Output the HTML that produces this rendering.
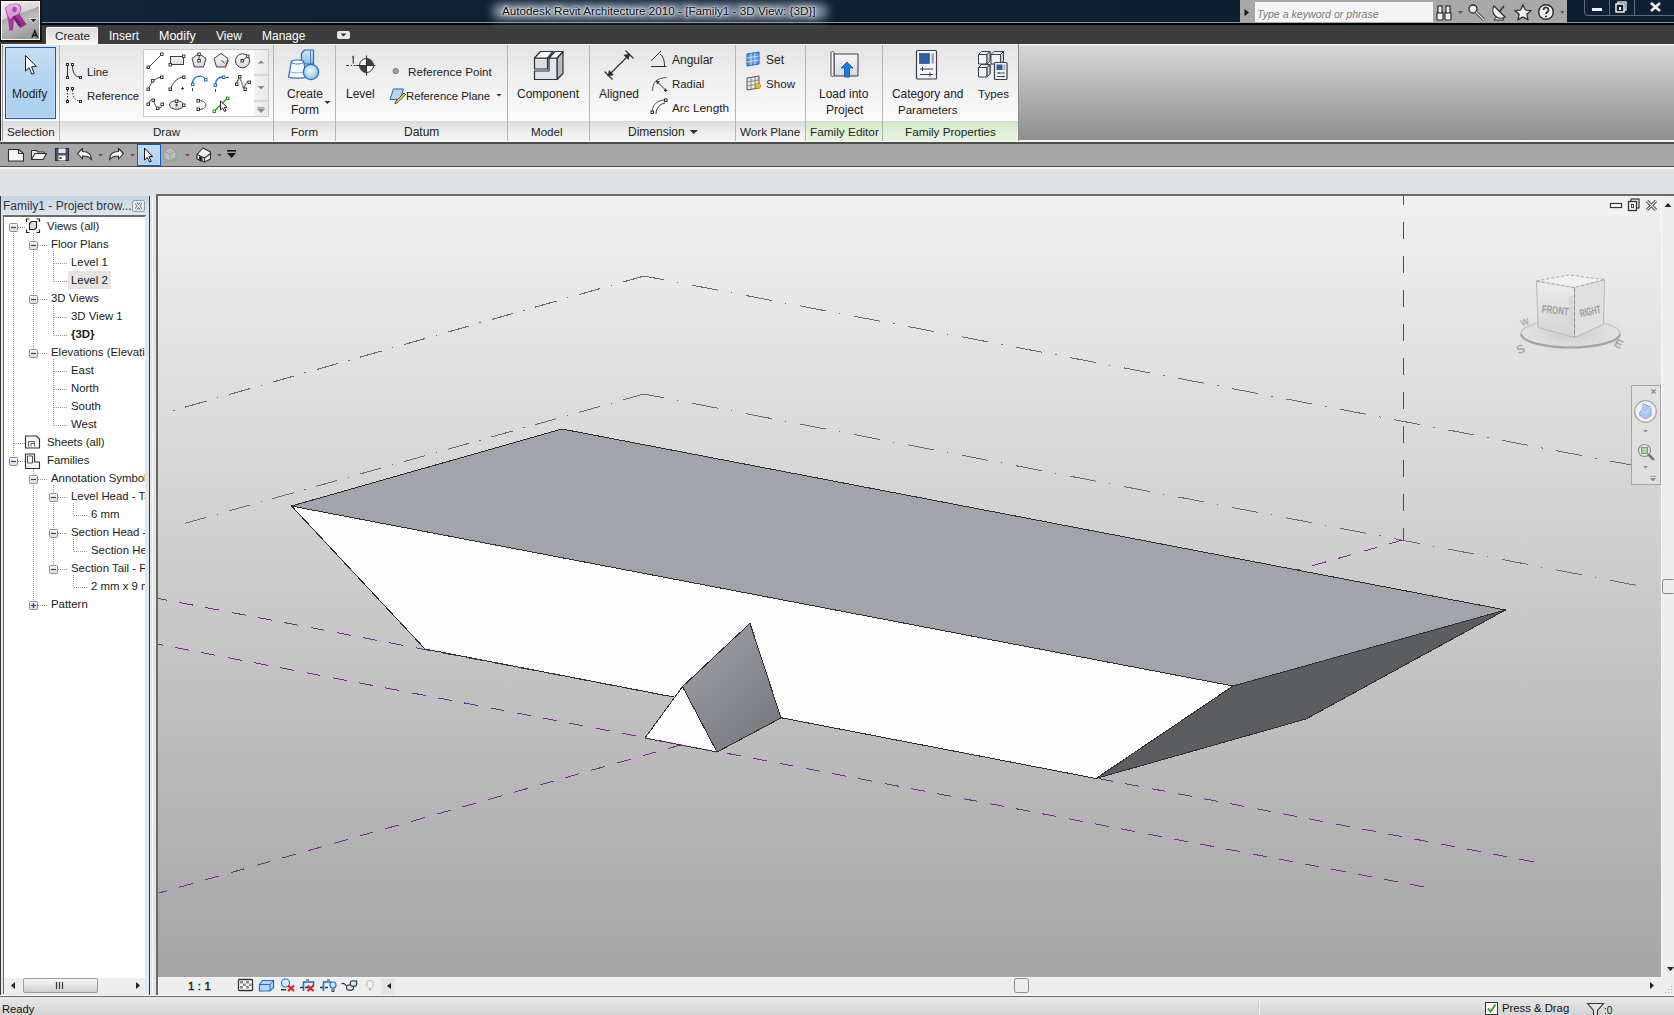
<!DOCTYPE html>
<html><head><meta charset="utf-8">
<style>
*{margin:0;padding:0;box-sizing:border-box}
html,body{width:1674px;height:1015px;overflow:hidden;background:#e1e2e4;font-family:"Liberation Sans",sans-serif;font-size:12px;color:#222}
.a{position:absolute}
.t{position:absolute;white-space:nowrap;line-height:14px}
</style></head><body>
<!-- title bar -->
<div class="a" style="left:0;top:0;width:1674px;height:22px;background:linear-gradient(90deg,#13253b 0%,#0f2034 35%,#0d1d31 100%)"></div>
<div class="a" style="left:0;top:22px;width:1674px;height:1px;background:#8193a8"></div>
<div class="a" style="left:0;top:23px;width:1674px;height:2px;background:#000"></div>
<div class="a" style="left:0;top:25px;width:1674px;height:19px;background:#3c3c3c"></div>
<!-- ribbon -->
<div class="a" style="left:0;top:44px;width:1674px;height:97px;background:linear-gradient(#f4f4f4,#f4f4f4 1px,#d6d6d6 2px,#8e8e8e 96px,#f4f4f4 96px)"></div>
<div class="a" style="left:0;top:44px;width:1019px;height:1px;background:#f8f8f8"></div>
<div class="a" style="left:0;top:45px;width:1019px;height:76px;background:linear-gradient(#e4e4e4,#eeeeee 40%,#f8f8f8 85%,#fbfbfb)"></div>
<div class="a" style="left:0;top:121px;width:1019px;height:1px;background:#d8d8d8"></div>
<div class="a" style="left:0;top:122px;width:1019px;height:19px;background:linear-gradient(#dcdcdc,#efefef 55%,#f4f4f4)"></div>
<div class="a" style="left:806px;top:122px;width:212px;height:19px;background:linear-gradient(#d3e8c8,#e2f2da 60%,#e8f6e1)"></div>
<div class="a" style="left:0;top:44px;width:1px;height:97px;background:#222"></div>
<div class="a" style="left:2px;top:45px;width:1px;height:96px;background:#9a9a9a"></div>
<div class="a" style="left:1018px;top:44px;width:1px;height:97px;background:#8a8a8a"></div>
<div class="a" style="left:59px;top:45px;width:1px;height:96px;background:#b4b4b4"></div>
<div class="a" style="left:273px;top:45px;width:1px;height:96px;background:#b4b4b4"></div>
<div class="a" style="left:335px;top:45px;width:1px;height:96px;background:#b4b4b4"></div>
<div class="a" style="left:507px;top:45px;width:1px;height:96px;background:#b4b4b4"></div>
<div class="a" style="left:589px;top:45px;width:1px;height:96px;background:#b4b4b4"></div>
<div class="a" style="left:735px;top:45px;width:1px;height:96px;background:#b4b4b4"></div>
<div class="a" style="left:805px;top:45px;width:1px;height:96px;background:#b4b4b4"></div>
<div class="a" style="left:882px;top:45px;width:1px;height:96px;background:#b4b4b4"></div>
<!-- Modify button -->
<div class="a" style="left:5px;top:47px;width:51px;height:72px;border:1px solid #0a5cc4;box-shadow:inset 0 0 0 1px #c4def5;background:linear-gradient(#c6ddf3,#b2d3f1 50%,#acd0f0)"></div>
<!-- draw gallery -->
<div class="a" style="left:143px;top:49px;width:126px;height:68px;border:1px solid #c8c8c8;background:#fff"></div>
<div class="a" style="left:254px;top:50px;width:14px;height:66px;background:linear-gradient(90deg,#f3f3f3,#e9e9e9)"></div>
<div class="a" style="left:254px;top:74px;width:14px;height:2px;background:#d6d6d6"></div>
<div class="a" style="left:254px;top:100px;width:14px;height:2px;background:#d6d6d6"></div>
<!-- ribbon texts -->
<div class="t" style="left:12px;top:87px">Modify</div>
<div class="t" style="left:87px;top:65px;font-size:11.3px">Line</div>
<div class="t" style="left:87px;top:89px;font-size:11.3px">Reference</div>
<div class="t" style="left:287px;top:87px">Create</div>
<div class="t" style="left:291px;top:103px">Form</div>
<div class="t" style="left:346px;top:87px">Level</div>
<div class="t" style="left:408px;top:65px;font-size:11.7px">Reference Point</div>
<div class="t" style="left:406px;top:89px;font-size:11.3px">Reference Plane</div>
<div class="t" style="left:517px;top:87px">Component</div>
<div class="t" style="left:599px;top:87px">Aligned</div>
<div class="t" style="left:672px;top:53px">Angular</div>
<div class="t" style="left:672px;top:77px;font-size:11.4px">Radial</div>
<div class="t" style="left:672px;top:101px;font-size:11.8px">Arc Length</div>
<div class="t" style="left:766px;top:53px">Set</div>
<div class="t" style="left:766px;top:77px;font-size:11.6px">Show</div>
<div class="t" style="left:819px;top:87px">Load into</div>
<div class="t" style="left:826px;top:103px">Project</div>
<div class="t" style="left:892px;top:87px;font-size:11.9px">Category and</div>
<div class="t" style="left:898px;top:103px;font-size:11.5px">Parameters</div>
<div class="t" style="left:978px;top:87px;font-size:11.6px">Types</div>
<div class="t" style="left:7px;top:125px;font-size:11.6px">Selection</div>
<div class="t" style="left:153px;top:125px;font-size:11.6px">Draw</div>
<div class="t" style="left:291px;top:125px;font-size:11.6px">Form</div>
<div class="t" style="left:404px;top:125px">Datum</div>
<div class="t" style="left:531px;top:125px;font-size:11.6px">Model</div>
<div class="t" style="left:628px;top:125px">Dimension</div>
<div class="t" style="left:740px;top:125px;font-size:11.7px">Work Plane</div>
<div class="t" style="left:810px;top:125px;font-size:11.8px">Family Editor</div>
<div class="t" style="left:905px;top:125px;font-size:11.7px">Family Properties</div>
<!-- ribbon icons -->
<svg class="a" style="left:0;top:0" width="1020" height="142">
<defs>
<linearGradient id="gb" x1="0" y1="0" x2="0" y2="1"><stop offset="0" stop-color="#d3e8f5"/><stop offset="1" stop-color="#8cc0e0"/></linearGradient>
<radialGradient id="gs" cx="0.45" cy="0.4" r="0.6"><stop offset="0" stop-color="#f4fbff"/><stop offset="1" stop-color="#8cc0e0"/></radialGradient>
<linearGradient id="gg" x1="0" y1="0" x2="0" y2="1"><stop offset="0" stop-color="#f6f7f9"/><stop offset="1" stop-color="#d5d9df"/></linearGradient>
</defs>
<!-- modify cursor -->
<path d="M25.5 55.5 L25.5 71 L29 67.7 L31.8 74.2 L34.2 73.2 L31.5 66.8 L36.3 66.5 Z" fill="#fff" stroke="#1a1a1a" stroke-width="1"/>
<!-- line icon -->
<g fill="none" stroke="#2b2f36" stroke-width="1">
<path d="M67.5 66v10"/><path d="M72.5 66c0 6 2.5 10.5 6.5 11"/>
<rect x="66.5" y="63.5" width="2" height="2" fill="#fff"/><rect x="66.5" y="76.5" width="2" height="2" fill="#fff"/><rect x="71.5" y="63.5" width="2" height="2" fill="#fff"/><rect x="79.5" y="76.5" width="2" height="2" fill="#fff"/>
<path d="M67.5 90v10" stroke-dasharray="1.5 1.5"/><path d="M72.5 90c0 6 2.5 10.5 6.5 11" stroke-dasharray="1.5 1.5"/>
<rect x="66.5" y="87.5" width="2" height="2" fill="#fff"/><rect x="66.5" y="100.5" width="2" height="2" fill="#fff"/><rect x="71.5" y="87.5" width="2" height="2" fill="#fff"/><rect x="79.5" y="100.5" width="2" height="2" fill="#fff"/>
</g>
<!-- gallery icons -->
<g fill="none" stroke="#3a3e45" stroke-width="1">
<path d="M148.5 67.5l13-13"/><rect x="147" y="66" width="2.5" height="2.5" fill="#fff"/><rect x="160.5" y="53" width="2.5" height="2.5" fill="#fff"/>
<rect x="170.5" y="56.5" width="13" height="8" fill="url(#gg)"/><rect x="169" y="63.5" width="2.5" height="2.5" fill="#fff"/><rect x="182.5" y="55" width="2.5" height="2.5" fill="#fff"/>
<path d="M199 53.5l7 5-2.5 8.5h-9l-2.5-8.5z" fill="url(#gg)"/><path d="M199 54v6"/><rect x="197.8" y="59.5" width="2.5" height="2.5" fill="#fff"/><rect x="197.8" y="53" width="2.5" height="2.5" fill="#fff"/>
<path d="M221 53.5l7 5-2.5 8.5h-9l-2.5-8.5z" fill="url(#gg)"/><path d="M221.5 60.5l3 2.5"/><path d="M228.5 60l-3 7.5" stroke="#e02020"/>
<circle cx="242.5" cy="60.8" r="7" fill="url(#gg)"/><path d="M242.5 60.8l5-4.5"/><rect x="241" y="59.5" width="2.5" height="2.5" fill="#fff"/><rect x="246.5" y="55" width="2.5" height="2.5" fill="#fff"/>
<path d="M148.5 89.5c1.5-6 6-11 13-13"/><rect x="147" y="88" width="2.5" height="2.5" fill="#fff"/><rect x="151.5" y="79.5" width="2.5" height="2.5" fill="#fff"/><rect x="160.5" y="76" width="2.5" height="2.5" fill="#fff"/>
<path d="M170.5 89.5c1.5-6 6-11 13-13"/><rect x="169" y="88" width="2.5" height="2.5" fill="#fff"/><rect x="182.5" y="76" width="2.5" height="2.5" fill="#fff"/><path d="M182.5 87v3M181 88.5h3"/>
<path d="M192.5 84c0-9 11-10 13-4" stroke="#1c6ed0" stroke-width="1.3"/><rect x="191.5" y="83" width="2.5" height="2.5" fill="#fff" stroke="#1c6ed0"/><rect x="204.5" y="78.5" width="2.5" height="2.5" fill="#fff" stroke="#1c6ed0"/><path d="M192.5 88v3"/>
<path d="M215.5 85c0-6 4-8 8-8" stroke="#1c6ed0" stroke-width="1.3"/><rect x="214" y="84" width="2.5" height="2.5" fill="#fff" stroke="#1c6ed0"/><rect x="222.5" y="76" width="2.5" height="2.5" fill="#fff" stroke="#1c6ed0"/><path d="M226 77.5h3M215.5 89v3"/>
<path d="M236.5 83.5l3-7 4 12 4-7.5" /><path d="M238 82l2-5 3 10 4-5" stroke="#9aa"/><rect x="238.5" y="75.5" width="2.5" height="2.5" fill="#fff"/><rect x="235.5" y="83" width="2.5" height="2.5" fill="#fff"/><rect x="244" y="88" width="2.5" height="2.5" fill="#fff"/><rect x="248" y="81" width="2.5" height="2.5" fill="#fff"/>
<path d="M148.5 104.5c2-6 4-6 5-4s2 8 5 8 3-3 4-5"/><rect x="147" y="103" width="2.5" height="2.5" fill="#fff"/><rect x="152" y="99" width="2.5" height="2.5" fill="#fff"/><rect x="156.5" y="107" width="2.5" height="2.5" fill="#fff"/><rect x="161" y="103" width="2.5" height="2.5" fill="#fff"/>
<ellipse cx="176.5" cy="105" rx="7" ry="4.3" fill="url(#gg)"/><path d="M176.5 103.5v3M175 105h3"/><rect x="175.3" y="100" width="2.5" height="2.5" fill="#fff"/><rect x="182.5" y="104" width="2.5" height="2.5" fill="#fff"/>
<path d="M199 100.5c5 0 7 3 7 4.5s-2 4.5-7 4.5"/><rect x="197" y="99.5" width="2.5" height="2.5" fill="#fff"/><rect x="197" y="108" width="2.5" height="2.5" fill="#fff"/>
<path d="M214.5 111l13-13" stroke="#18a018" stroke-width="1.5"/><rect x="213" y="110" width="2.5" height="2.5" fill="#fff" stroke="#18a018"/><rect x="226.5" y="97" width="2.5" height="2.5" fill="#fff" stroke="#18a018"/>
</g>
<path d="M220.5 101v9l2.2-2 1.8 3.5 1.5-.7-1.7-3.4 2.8-.2z" fill="#fff" stroke="#111" stroke-width=".9"/>
<path d="M257.5 63.5h7l-3.5-3z" fill="#8a8a8a"/><path d="M257.5 86h7l-3.5 3.5z" fill="#8a8a8a"/><path d="M257.5 107.5h7M257.5 109h7l-3.5 3.5z" fill="#8a8a8a" stroke="#8a8a8a" stroke-width=".8"/>
<!-- create form -->
<path d="M301.5 53.5l3-3.5h9v14h-12z" fill="url(#gb)" stroke="#2a6cc0" stroke-width="1.2"/><path d="M310.5 50v14" stroke="#2a6cc0" stroke-width=".8"/>
<path d="M291.5 61c1-1 11-1 12 0l3 16c-3 1.5-15 1.5-18 0z" fill="#f4fafe" stroke="#2a6cc0" stroke-width="1.2"/><ellipse cx="297.5" cy="62" rx="6" ry="2" fill="#fff" stroke="#2a6cc0" stroke-width=".9"/><path d="M290 72c4 1 10 1 15 0" stroke="#6aa6de" stroke-width=".8" fill="none"/>
<circle cx="311" cy="72" r="7.6" fill="url(#gs)" stroke="#2a6cc0" stroke-width="1.3"/>
<path d="M324.5 101h6l-3 3z" fill="#333"/>
<!-- level -->
<g stroke="#2b2f36" stroke-width="1" fill="none"><path d="M346 65.5h3M351 65.5h1M353.5 65.5h2M356 65.5h19.5M366.5 56v19"/><path d="M352.2 57.5l1-1v7" stroke-width="1.1"/></g>
<circle cx="366.5" cy="65.5" r="7" fill="#fff" stroke="#2b2f36" stroke-width="1"/>
<path d="M366.5 65.5V58.5A7 7 0 0 1 373.5 65.5Z M366.5 65.5V72.5A7 7 0 0 1 359.5 65.5Z" fill="#3d4249"/>
<path d="M366.5 55.5v20M358 65.5h17" stroke="#2b2f36" stroke-width="1.1"/>
<circle cx="395.7" cy="71" r="2.7" fill="#9a9da2" stroke="#6a6d72" stroke-width=".8"/>
<!-- ref plane -->
<path d="M393.5 89h10l-3.5 10.5h-10z" fill="#b7d6ee" stroke="#1c5fc0" stroke-width="1"/>
<path d="M404 93l-8 8 -1.2 2.8 2.8-1.2 8-8z" fill="#f0c040" stroke="#333" stroke-width=".8"/>
<path d="M496.5 94h5l-2.5 2.5z" fill="#333"/>
<!-- component -->
<g stroke="#2b2f36" stroke-width="1.2" stroke-linejoin="round">
<path d="M557 58 L563 51.5 L563 73.5 L557 79.5 Z" fill="#b3bbc7"/>
<path d="M549 58 H557 V79.5 H534.5 V71 H549 Z" fill="#e3e6eb"/>
<path d="M534.5 58 H547.5 V69 H534.5 Z" fill="#dde1e6"/>
<path d="M534.5 58 L540.5 51.5 H553 L547.5 58 Z" fill="#fafbfc"/>
<path d="M549 58 L555 51.5 H563 L557 58 Z" fill="#fafbfc"/>
</g>
<path d="M689.5 130h8.5l-4.25 4z" fill="#333"/>
<!-- aligned -->
<g stroke="#2b2f36" stroke-width="1.1" fill="none"><path d="M604.5 71.5l8 8M625.5 50.5l8 8M608.5 75.5l21-21"/></g>
<path d="M607.5 76.5l1.5-6.5 5 5z M630 53.5l-6.5 1.5 5 5z" fill="#2b2f36"/>
<!-- angular -->
<g stroke="#2b2f36" stroke-width="1" fill="none"><path d="M651 61l10-10M651 66.5h15.5M660 54c3 2 4.5 6 4.5 12"/></g>
<!-- radial -->
<g stroke="#2b2f36" stroke-width="1" fill="none"><path d="M652.5 91c0-9 4.5-13 14-13.5" stroke="#555"/><path d="M656.5 81l9 9M664 90.5h3.5M665.7 88.5v3.5"/></g>
<path d="M656 80.5l4 1-3 3z" fill="#2b2f36"/>
<!-- arc length -->
<g stroke="#2b2f36" stroke-width="1" fill="none"><path d="M652 113c0-8 5-13 13-13" stroke="#555"/><path d="M656 114c0-6 4-10 9-11"/></g>
<rect x="651" y="111" width="2.5" height="2.5" fill="#fff" stroke="#111" stroke-width=".9"/><rect x="664.5" y="99" width="2.5" height="2.5" fill="#fff" stroke="#111" stroke-width=".9"/>
<!-- set/show -->
<g stroke="#1c5fc0" stroke-width="1" fill="#5b9ae0"><path d="M747 54l12-2v12l-12 2z"/></g>
<g stroke="#e8f0fa" stroke-width=".8" fill="none"><path d="M751 53.3v12M755 52.7v12M747 58l12-2M747 62l12-2"/></g>
<g stroke="#555" stroke-width="1" fill="#e6e6e6"><path d="M747 78l12-2v12l-12 2z"/></g>
<g stroke="#777" stroke-width=".8" fill="none"><path d="M751 77.3v12M755 76.7v12M747 82l12-2M747 86l12-2"/></g>
<circle cx="758" cy="86" r="2.7" fill="#f4b418" stroke="#c08000" stroke-width=".6"/>
<!-- load into project -->
<path d="M834 54h24v22h-24z" fill="url(#gg)" stroke="#3a3e45" stroke-width="1"/>
<path d="M831 53c0-2 3-2 3 0v22c0 2-3 2-3 0z" fill="#fff" stroke="#3a3e45" stroke-width="1"/>
<path d="M847 62l-6 6h3.5v9h5v-9h3.5z" fill="#1a7ae0" stroke="#0c4ea8" stroke-width=".8"/>
<!-- category -->
<rect x="916.5" y="50.5" width="20" height="28.5" rx="1" fill="#f4f5f7" stroke="#3a3e45" stroke-width="1.2"/>
<rect x="919.5" y="53.5" width="10" height="10" fill="#2d5fa8" stroke="#1a3e78" stroke-width=".6"/>
<rect x="931.5" y="53.5" width="2.5" height="10" fill="#a0a4aa"/>
<path d="M920 69h13M922.5 67v4M920 74.5h13M930 72.5v4" stroke="#3a3e45" stroke-width="1.1"/>
<!-- types -->
<g stroke="#3a3e45" stroke-width="1" stroke-linejoin="round">
<path d="M978.5 54.5 L981.5 51.5 H990 V61 L987 64 H978.5 Z" fill="#f0f2f5"/><path d="M978.5 54.5 H987 V64 M987 54.5 L990 51.5" fill="none"/><path d="M987 54.5 L990 51.5 V61 L987 64 Z" fill="#c8ced6"/>
<path d="M991 54.5 L994 51.5 H1003.5 V61 L1000.5 64 H991 Z" fill="#f0f2f5"/><path d="M991 54.5 H1000.5 V64 M1000.5 54.5 L1003.5 51.5" fill="none"/><path d="M1000.5 54.5 L1003.5 51.5 V61 L1000.5 64 Z" fill="#c8ced6"/>
<path d="M978.5 67.5 L981.5 64.5 H990 V74 L987 77 H978.5 Z" fill="#f0f2f5"/><path d="M978.5 67.5 H987 V77 M987 67.5 L990 64.5" fill="none"/><path d="M987 67.5 L990 64.5 V74 L987 77 Z" fill="#c8ced6"/>
</g>
<rect x="994.5" y="62.5" width="12.5" height="17" rx="1" fill="#f4f5f7" stroke="#3a3e45" stroke-width="1.2"/>
<rect x="996.5" y="64.5" width="6" height="5.5" fill="#2d5fa8"/><rect x="1003.5" y="64.5" width="1.5" height="5.5" fill="#a0a4aa"/>
<path d="M997 73h8M997 76.5h8M999 72v2M1003 75.5v2" stroke="#3a3e45" stroke-width=".9"/>
</svg>
<!-- tabs -->
<div class="a" style="left:46px;top:27px;width:52px;height:17px;border:1px solid #fdfdfd;border-bottom:none;border-radius:2px 2px 0 0;background:linear-gradient(#d8d8d8,#e8e8e8 50%,#f6f6f6)"></div>
<div class="t" style="left:55px;top:29px;font-size:11.7px">Create</div>
<div class="t" style="left:109px;top:29px;color:#fff">Insert</div>
<div class="t" style="left:159px;top:29px;color:#fff;font-size:12.5px">Modify</div>
<div class="t" style="left:216px;top:29px;color:#fff">View</div>
<div class="t" style="left:262px;top:29px;color:#fff">Manage</div>
<div class="a" style="left:337px;top:31px;width:13px;height:8px;background:#e8e8e8;border-radius:2px"></div>
<svg class="a" style="left:337px;top:31px" width="13" height="8"><path d="M3.5 2.5h6l-3 3z" fill="#333"/></svg>
<!-- title text -->
<div class="a" style="left:492px;top:3px;width:336px;height:17px;border-radius:8px;background:rgba(205,218,232,.55);filter:blur(4px)"></div><div class="t" style="left:502px;top:4px;color:#0a0a0a;font-size:11.7px;text-shadow:0 0 2px #fff,0 0 3px #fff,0 0 6px rgba(235,242,250,.9),0 0 9px rgba(210,222,236,.8)">Autodesk Revit Architecture 2010 - [Family1 - 3D View: {3D}]</div>
<!-- app button -->
<div class="a" style="left:0;top:0;width:42px;height:42px;background:#141414"></div>
<div class="a" style="left:1px;top:1px;width:39px;height:39px;border:1px solid #f4f4f4;background:linear-gradient(160deg,#f0f0f0 0%,#d8d8d8 35%,#a8a8a8 36%,#bdbdbd 50%,#8e8e8e 100%)"></div>
<svg class="a" style="left:0;top:0" width="42" height="42">
<defs>
<linearGradient id="rg1" x1="0" y1="0" x2="0" y2="1"><stop offset="0" stop-color="#e8b4e6"/><stop offset="1" stop-color="#d68ad2"/></linearGradient>
<linearGradient id="rg2" x1="0" y1="0" x2="1" y2="1"><stop offset="0" stop-color="#c650bc"/><stop offset="1" stop-color="#8a1e84"/></linearGradient>
</defs>
<path d="M5 8 L10 4 L16 3.5 C21 3.5 22 8 21 11 L19.5 14 L26.5 24.5 L20 28 L14 19 L13 30 L9.5 31 L8 20 Z" fill="url(#rg2)"/>
<path d="M6 8 L10 4.5 L15.5 4 C19.5 4 21 7 20.5 10.5 L19 13.5 L13 16.5 L10.5 19 L8 16 Z" fill="url(#rg1)"/>
<ellipse cx="14.5" cy="9.5" rx="2.3" ry="2.8" fill="#9a5a96"/>
<path d="M12 17 L15 15.5 L21.5 25 L19 26.5 Z" fill="#6e1268" opacity=".7"/>
<path d="M29.5 18.5h8l-4 4.5z" fill="#2a2e36" stroke="#f6f6f6" stroke-width=".8"/>
<path d="M32 37.5l2.8-6.5 2.8 6.5M33 35.5h3.6" stroke="#1a1a1a" stroke-width="1.5" fill="none"/>
</svg>
<!-- search -->
<div class="a" style="left:1240px;top:0;width:327px;height:23px;background:#a8a8a8"></div>
<div class="a" style="left:1255px;top:2px;width:178px;height:20px;background:#f5f5f5"></div>
<svg class="a" style="left:1243px;top:8px" width="8" height="9"><path d="M1.5 1v7l4.5-3.5z" fill="#111"/></svg>
<div class="t" style="left:1257px;top:7px;color:#7a7a7a;font-style:italic;font-size:10.6px">Type a keyword or phrase</div>
<svg class="a" style="left:1434px;top:2px" width="134" height="20">
<g fill="#f4f4f4" stroke="#2a2a2a" stroke-width="1.2">
<rect x="3" y="10" width="6" height="8" rx="1"/><rect x="11" y="10" width="6" height="8" rx="1"/>
<rect x="4" y="4" width="4" height="7"/><rect x="12" y="4" width="4" height="7"/>
</g>
<path d="M24 9h5l-2.5 3z" fill="#555"/>
<circle cx="39" cy="7" r="4" fill="#f0f0f0" stroke="#2a2a2a" stroke-width="1.3"/>
<path d="M42 10l8 8" stroke="#2a2a2a" stroke-width="3"/><path d="M42 10l8 8" stroke="#eee" stroke-width="1.2"/>
<path d="M60 18h10l-5-7z" fill="#eee" stroke="#2a2a2a"/>
<path d="M60 4 a8 8 0 0 0 11 11 z" fill="#f0f0f0" stroke="#2a2a2a" stroke-width="1.2"/>
<path d="M66 9l4-5" stroke="#2a2a2a" stroke-width="1.3"/>
<path d="M89 3l2.4 5 5.4.6-4 3.7 1.1 5.3-4.9-2.7-4.9 2.7 1.1-5.3-4-3.7 5.4-.6z" fill="#f0f0f0" stroke="#2a2a2a" stroke-width="1.2"/>
<circle cx="112" cy="10" r="7.3" fill="#f0f0f0" stroke="#2a2a2a" stroke-width="1.4"/>
<path d="M109.5 8a2.5 2.5 0 1 1 3.5 2.3c-.8.4-1 .9-1 1.7" stroke="#2a2a2a" stroke-width="1.6" fill="none"/><circle cx="112" cy="14.5" r="1" fill="#2a2a2a"/>
<path d="M126 9h4.5l-2.25 3z" fill="#555"/>
</svg>
<!-- window buttons -->
<div class="a" style="left:1584px;top:-2px;width:92px;height:18px;border:1px solid #5a6c80;border-radius:0 0 0 4px;background:#0f2035"></div>
<div class="a" style="left:1609px;top:0;width:1px;height:15px;background:#5a6c80"></div>
<div class="a" style="left:1634px;top:0;width:1px;height:15px;background:#5a6c80"></div>
<svg class="a" style="left:1584px;top:0" width="90" height="16">
<rect x="8" y="8" width="10" height="3" fill="#f0f0f0"/>
<rect x="34" y="2" width="8" height="8" fill="none" stroke="#f0f0f0" stroke-width="1.3"/>
<rect x="32" y="4" width="8" height="8" fill="#0f2035" stroke="#f0f0f0" stroke-width="1.5"/>
<rect x="35" y="7" width="2" height="3" fill="#f0f0f0"/>
<path d="M67 3l9 8M76 3l-9 8" stroke="#f0f0f0" stroke-width="2.6"/>
</svg>
<!-- qat -->
<div class="a" style="left:0;top:141px;width:1674px;height:1px;background:#f6f6f6"></div>
<div class="a" style="left:0;top:142px;width:1674px;height:2px;background:#4e4e4e"></div>
<div class="a" style="left:0;top:144px;width:1674px;height:22px;background:#a6a6a6"></div>
<div class="a" style="left:0;top:166px;width:1674px;height:1px;background:#4e4e4e"></div>
<div class="a" style="left:0;top:167px;width:1674px;height:2px;background:#f2f2f2"></div>
<div class="a" style="left:137px;top:144px;width:24px;height:22px;border:1px solid #0a5cc4;box-shadow:inset 0 0 0 1px #c4def5;background:linear-gradient(#c6ddf3,#acd0f0)"></div>
<svg class="a" style="left:0;top:144px" width="240" height="22">
<g stroke="#2b2f36" stroke-width="1.1" stroke-linejoin="round">
<path d="M8.5 5.5h10l5 4v7.5h-15z" fill="#f6f7f9"/><path d="M18.5 5.5v4h5" fill="none"/>
<path d="M31.5 15.5v-9h5l1.5 1.5h6v2.5" fill="#e9ecf0"/><path d="M31.5 15.5l3.5-6h11.5l-3.5 6z" fill="#f6f7f9"/>
<path d="M55.5 4.5h13v12h-13z" fill="#4a5868"/><rect x="58.5" y="4.5" width="7" height="4.5" fill="#e6e9ee" stroke="none"/><rect x="58.5" y="11.5" width="7" height="5" fill="#fff" stroke="none"/><rect x="59.5" y="13" width="2" height="2" fill="#333" stroke="none"/>
<path d="M77.5 9.5l5-5v3c5 0 9 2 9 8.5-1.5-3-4-4-9-4v3z" fill="#fff"/>
<path d="M123.5 9.5l-5-5v3c-5 0-9 2-9 8.5 1.5-3 4-4 9-4v3z" fill="#fff"/>
</g>
<path d="M98 10h5l-2.5 2.5z M130 10h5l-2.5 2.5z M185 10h5l-2.5 2.5z M217 10h5l-2.5 2.5z" fill="#555"/>
<rect x="227" y="6" width="9" height="1.6" fill="#111"/><path d="M227 9h9l-4.5 5z" fill="#111"/>
<path d="M144.5 4v12l2.8-2.6 2.2 4.6 1.7-.8-2.2-4.5 3.6-.2z" fill="#fff" stroke="#111" stroke-width="1"/>
<g stroke="#9a9a9a" stroke-width="1" fill="#bdbdbd"><path d="M164 7l6-3.5 6 3.5v7l-6 3.5-6-3.5z"/><path d="M164 7l6 3.5 6-3.5M170 10.5v7" fill="none"/></g>
<path d="M172 16a4 4 0 0 0 6-4M178 12l-1.5 1.5M172 16l1.5-1.5" stroke="#62c862" stroke-width="1.4" fill="none"/>
<g stroke="#2b2f36" stroke-width="1.1" stroke-linejoin="round"><path d="M197 10.5l6-6.5 7.5 4v7l-6 3-7.5-3z" fill="#f0f2f4"/><path d="M197 10.5l7.5 3.5 6-4.5" fill="none"/><path d="M204.5 14v4.5" fill="none"/><path d="M199.5 17v-4h2.5v4.5" fill="#1a1a1a"/></g>
</svg>
<!-- project browser -->
<div class="a" style="left:0;top:196px;width:150px;height:799px;background:#dfe6ee"></div>
<div class="a" style="left:0;top:196px;width:1px;height:801px;background:#3a3a3a"></div>
<div class="a" style="left:1px;top:196px;width:148px;height:19px;background:linear-gradient(#c5d4e4,#dfe7f0)"></div>
<div class="t" style="left:3px;top:199px;color:#333;font-size:12px">Family1 - Project brow...</div>
<div class="a" style="left:132px;top:200px;width:13px;height:12px;border:1px solid #8f9cb0;border-radius:2px;background:#e4eaf2"></div>
<svg class="a" style="left:132px;top:200px" width="13" height="12"><path d="M4 3l5 6M9 3l-5 6" stroke="#333" stroke-width="2.6"/><path d="M4 3l5 6M9 3l-5 6" stroke="#fff" stroke-width="1.2"/></svg>
<div class="a" style="left:149px;top:196px;width:1px;height:801px;background:#3a3a3a"></div>
<div class="a" style="left:3px;top:215px;width:143px;height:780px;background:#fff;border-top:2px solid #6b6b6b;border-left:1px solid #6b6b6b"></div>
<div class="a" style="left:145px;top:216px;width:4px;height:779px;background:#dde7f3"></div>
<div class="a" style="left:1px;top:994px;width:148px;height:3px;background:#dde7f3"></div>
<div class="a" style="left:4px;top:978px;width:141px;height:16px;background:#eeeeee"></div>
<div class="a" style="left:23px;top:978px;width:75px;height:15px;border:1px solid #9a9a9a;border-radius:2px;background:linear-gradient(#f6f6f6,#e6e6e6 45%,#cfcfcf)"></div>
<svg class="a" style="left:0;top:977px" width="150" height="18"><path d="M56.5 5v7M59.5 5v7M62.5 5v7" stroke="#3a3a3a" stroke-width="1.2"/><path d="M15 5v7l-4-3.5z M136 5v7l4-3.5z" fill="#222"/></svg>
<svg class="a" style="left:0;top:0" width="150" height="620">
<defs><linearGradient id="eg" x1="0" y1="0" x2="0" y2="1"><stop offset="0" stop-color="#fafafa"/><stop offset="1" stop-color="#dcdcdc"/></linearGradient></defs>
<g stroke="#9a9a9a" stroke-width="1" stroke-dasharray="1 1" fill="none">
<path d="M13.5 227V461.5"/>
<path d="M33.5 233V353.5"/>
<path d="M53.5 251V281.5"/>
<path d="M53.5 305V335.5"/>
<path d="M53.5 359V425.5"/>
<path d="M33.5 467V605.5"/>
<path d="M53.5 485V569.5"/>
<path d="M73.5 503V515.5"/>
<path d="M73.5 539V551.5"/>
<path d="M73.5 575V587.5"/>
<path d="M14 227.5H25"/>
<path d="M34 245.5H48"/>
<path d="M54 263.5H68"/>
<path d="M54 281.5H68"/>
<path d="M34 299.5H48"/>
<path d="M54 317.5H68"/>
<path d="M54 335.5H68"/>
<path d="M34 353.5H48"/>
<path d="M54 371.5H68"/>
<path d="M54 389.5H68"/>
<path d="M54 407.5H68"/>
<path d="M54 425.5H68"/>
<path d="M14 443.5H25"/>
<path d="M14 461.5H25"/>
<path d="M34 479.5H48"/>
<path d="M54 497.5H68"/>
<path d="M74 515.5H88"/>
<path d="M54 533.5H68"/>
<path d="M74 551.5H88"/>
<path d="M54 569.5H68"/>
<path d="M74 587.5H88"/>
<path d="M34 605.5H48"/>
</g>
<rect x="9.5" y="223.5" width="8" height="8" rx="1" fill="url(#eg)" stroke="#8e8e8e" stroke-width="1"/>
<path d="M11 227.5h5" stroke="#2540a0" stroke-width="1.2"/>
<rect x="29.5" y="241.5" width="8" height="8" rx="1" fill="url(#eg)" stroke="#8e8e8e" stroke-width="1"/>
<path d="M31 245.5h5" stroke="#2540a0" stroke-width="1.2"/>
<rect x="29.5" y="295.5" width="8" height="8" rx="1" fill="url(#eg)" stroke="#8e8e8e" stroke-width="1"/>
<path d="M31 299.5h5" stroke="#2540a0" stroke-width="1.2"/>
<rect x="29.5" y="349.5" width="8" height="8" rx="1" fill="url(#eg)" stroke="#8e8e8e" stroke-width="1"/>
<path d="M31 353.5h5" stroke="#2540a0" stroke-width="1.2"/>
<rect x="9.5" y="457.5" width="8" height="8" rx="1" fill="url(#eg)" stroke="#8e8e8e" stroke-width="1"/>
<path d="M11 461.5h5" stroke="#2540a0" stroke-width="1.2"/>
<rect x="29.5" y="475.5" width="8" height="8" rx="1" fill="url(#eg)" stroke="#8e8e8e" stroke-width="1"/>
<path d="M31 479.5h5" stroke="#2540a0" stroke-width="1.2"/>
<rect x="49.5" y="493.5" width="8" height="8" rx="1" fill="url(#eg)" stroke="#8e8e8e" stroke-width="1"/>
<path d="M51 497.5h5" stroke="#2540a0" stroke-width="1.2"/>
<rect x="49.5" y="529.5" width="8" height="8" rx="1" fill="url(#eg)" stroke="#8e8e8e" stroke-width="1"/>
<path d="M51 533.5h5" stroke="#2540a0" stroke-width="1.2"/>
<rect x="49.5" y="565.5" width="8" height="8" rx="1" fill="url(#eg)" stroke="#8e8e8e" stroke-width="1"/>
<path d="M51 569.5h5" stroke="#2540a0" stroke-width="1.2"/>
<rect x="29.5" y="601.5" width="8" height="8" rx="1" fill="url(#eg)" stroke="#8e8e8e" stroke-width="1"/>
<path d="M31 605.5h5" stroke="#2540a0" stroke-width="1.2"/>
<path d="M33.5 603v5" stroke="#2540a0" stroke-width="1.2"/>
<g stroke="#222" stroke-width="1.2" fill="none"><path d="M26.5 222v-3h3M36.5 219h3v3M39.5 229.5v3h-3M29.5 232.5h-3v-3"/></g>
<path d="M29.5 223.5l2-2h5v6l-2 2h-5z" fill="#dfe2e6" stroke="#222" stroke-width="1.1"/>
<path d="M25.5 436.0h11l3 3v9h-14z" fill="#f4f4f4" stroke="#333" stroke-width="1.1"/><path d="M28.5 446.5v-5h6v5M31 446.5v-3h3" stroke="#555" stroke-width=".9" fill="none"/>
<path d="M25.5 454.0h9v8h5v6.5h-14z" fill="#f4f4f4" stroke="#333" stroke-width="1.1"/><path d="M27.5 456.0h5v7h-5z" fill="#fff" stroke="#444" stroke-width=".9"/>
</svg>
<div class="a" style="left:68px;top:271px;width:43px;height:18px;background:#e4e4e4"></div>
<div style="position:absolute;left:0;top:0;font-size:11.4px;color:#1a1a1a">
<div class="t" style="left:47px;top:219px">Views (all)</div>
<div class="t" style="left:51px;top:237px">Floor Plans</div>
<div class="t" style="left:71px;top:255px">Level 1</div>
<div class="t" style="left:71px;top:273px">Level 2</div>
<div class="t" style="left:51px;top:291px">3D Views</div>
<div class="t" style="left:71px;top:309px">3D View 1</div>
<div class="t" style="left:71px;top:327px;font-weight:bold">{3D}</div>
<div class="a" style="left:51px;top:345px;width:94px;height:16px;overflow:hidden"><div class="t" style="left:0;top:0">Elevations (Elevation 1)</div></div>
<div class="t" style="left:71px;top:363px">East</div>
<div class="t" style="left:71px;top:381px">North</div>
<div class="t" style="left:71px;top:399px">South</div>
<div class="t" style="left:71px;top:417px">West</div>
<div class="t" style="left:47px;top:435px">Sheets (all)</div>
<div class="t" style="left:47px;top:453px">Families</div>
<div class="a" style="left:51px;top:471px;width:94px;height:16px;overflow:hidden"><div class="t" style="left:0;top:0">Annotation Symbols</div></div>
<div class="a" style="left:71px;top:489px;width:74px;height:16px;overflow:hidden"><div class="t" style="left:0;top:0">Level Head - Target</div></div>
<div class="t" style="left:91px;top:507px">6 mm</div>
<div class="a" style="left:71px;top:525px;width:74px;height:16px;overflow:hidden"><div class="t" style="left:0;top:0">Section Head - Filled</div></div>
<div class="a" style="left:91px;top:543px;width:54px;height:16px;overflow:hidden"><div class="t" style="left:0;top:0">Section Head</div></div>
<div class="a" style="left:71px;top:561px;width:74px;height:16px;overflow:hidden"><div class="t" style="left:0;top:0">Section Tail - Filled</div></div>
<div class="a" style="left:91px;top:579px;width:54px;height:16px;overflow:hidden"><div class="t" style="left:0;top:0">2 mm x 9 mm</div></div>
<div class="t" style="left:51px;top:597px">Pattern</div>
</div>
<!-- splitter -->
<div class="a" style="left:150px;top:194px;width:6px;height:801px;background:#e4e5e7"></div>
<div class="a" style="left:152px;top:196px;width:1px;height:799px;background:#f8f8f8"></div>
<!-- viewport -->
<svg class="a" style="left:0;top:0" width="1674" height="1015">
<defs>
<linearGradient id="vg" x1="0" y1="196" x2="0" y2="977" gradientUnits="userSpaceOnUse"><stop offset="0" stop-color="#f1f1f1"/><stop offset="1" stop-color="#a5a5a5"/></linearGradient>
<linearGradient id="pg" x1="690" y1="640" x2="780" y2="740" gradientUnits="userSpaceOnUse"><stop offset="0" stop-color="#9c9ea4"/><stop offset="1" stop-color="#74767b"/></linearGradient>
<clipPath id="vc"><rect x="158" y="196" width="1504" height="781"/></clipPath>
<radialGradient id="cubeshadow" cx="0.5" cy="0.5" r="0.5"><stop offset="0" stop-color="#bdbdbd" stop-opacity=".7"/><stop offset="1" stop-color="#d8d8d8" stop-opacity="0"/></radialGradient>
<linearGradient id="cubef" x1="0" y1="0" x2="0" y2="1"><stop offset="0" stop-color="#ececec"/><stop offset="1" stop-color="#d4d4d4"/></linearGradient>
</defs>
<rect x="156" y="194" width="1518" height="2" fill="#6a6a6a"/>
<rect x="156" y="194" width="2" height="801" fill="#6a6a6a"/>
<rect x="158" y="196" width="1504" height="781" fill="url(#vg)"/>
<g clip-path="url(#vc)">
<!-- gray dash-dot reference lines -->
<g stroke="#6a6a6a" stroke-width="1" fill="none" shape-rendering="crispEdges">
<path d="M644 276 L168 412" stroke-dasharray="22 11 1.5 11"/>
<path d="M644 276 L1631 465" stroke-dasharray="20 13.5 1.5 13.5 26.5 13.5 1.5 13.5 26.5 13.5 1.5 13.5 26.5 13.5 1.5 13.5 26.5 13.5 1.5 13.5 26.5 13.5 1.5 13.5 26.5 13.5 1.5 13.5 26.5 13.5 1.5 13.5 26.5 13.5 1.5 13.5 26.5 13.5 1.5 13.5 26.5 13.5 1.5 13.5 26.5 13.5 1.5 13.5 26.5 13.5 1.5 13.5 26.5 13.5 1.5 13.5 26.5 13.5 1.5 13.5 26.5 13.5 1.5 13.5 26.5 13.5 1.5 13.5 26.5 13.5 1.5 13.5 26.5 13.5 1.5 13.5 26.5 13.5 1.5 13.5"/>
<path d="M644 394 L179 525" stroke-dasharray="22 11 1.5 11"/>
<path d="M644 394 L1645 587" stroke-dasharray="20 13.5 1.5 13.5 26.5 13.5 1.5 13.5 26.5 13.5 1.5 13.5 26.5 13.5 1.5 13.5 26.5 13.5 1.5 13.5 26.5 13.5 1.5 13.5 26.5 13.5 1.5 13.5 26.5 13.5 1.5 13.5 26.5 13.5 1.5 13.5 26.5 13.5 1.5 13.5 26.5 13.5 1.5 13.5 26.5 13.5 1.5 13.5 26.5 13.5 1.5 13.5 26.5 13.5 1.5 13.5 26.5 13.5 1.5 13.5 26.5 13.5 1.5 13.5 26.5 13.5 1.5 13.5 26.5 13.5 1.5 13.5 26.5 13.5 1.5 13.5 26.5 13.5 1.5 13.5"/>
</g>
<!-- purple reference planes -->
<g stroke="#7a2a8c" stroke-width="1" fill="none" shape-rendering="crispEdges">
<path d="M1403.5 187.8 V540" stroke-dasharray="17 17"/>
<path d="M1403 540 L159 893" stroke-dasharray="14.25 12.51"/>
<path d="M152.8 597.4 L1537 862.5" stroke-dasharray="14.25 12.51"/>
<path d="M148.8 642.5 L1427 887.5" stroke-dasharray="14.25 12.51"/>
</g>
<!-- solid -->
<g stroke="#2e2e2e" stroke-width="1" stroke-linejoin="round" shape-rendering="crispEdges">
<path d="M291.5 506 L562 429 L1505.5 610 L1233 686 Z" fill="#a1a4ab"/>
<path d="M291.5 506 L1233 686 L1096 778.5 L425 649 Z" fill="#fdfdfd"/>
<path d="M1233 686 L1505.5 610 L1306 719 L1096 778.5 Z" fill="#5c5d61"/>
<path d="M645 738 L682.5 686.6 L717 752 Z" fill="#fdfdfd"/>
<path d="M682.5 686.6 L750 623.3 L781 718 L717 752 Z" fill="url(#pg)"/>
</g>
<path d="M645 738 L717 752" stroke="#7a2a8c" stroke-width="1" stroke-dasharray="6 6" fill="none"/>
<!-- viewcube -->
<ellipse cx="1570.5" cy="333" rx="58" ry="22" fill="url(#cubeshadow)"/>
<path d="M1521 333.5 A49.5 14 0 0 0 1620 333.5" fill="none" stroke="#a4a4a4" stroke-width="2.2"/>
<path d="M1521 333.5 A49.5 14 0 0 1 1620 333.5" fill="none" stroke="#c4c4c4" stroke-width="1.5"/>
<path d="M1536.5 281 L1574.5 287.5 L1574.5 337.5 L1538 327.5 Z" fill="url(#cubef)" stroke="#b8b8b8" stroke-width="1"/>
<path d="M1574.5 287.5 L1604.5 279.5 L1603.5 324.5 L1574.5 337.5 Z" fill="#e0e0e0" stroke="#b8b8b8" stroke-width="1"/>
<path d="M1536.5 281 L1568.5 275 L1604.5 279.5 L1574.5 287.5 Z" fill="#f0f0f0" stroke="#a8a8a8" stroke-width="1" stroke-dasharray="3 2"/>
<path d="M1574.5 288 V337" stroke="#8e8e8e" stroke-width="1" stroke-dasharray="4 2"/>
<rect x="1569" y="296" width="4" height="30" fill="#d0d0d0" opacity=".6"/>
<g fill="#9c9c9c" font-family="Liberation Sans" font-weight="bold">
<text x="1542" y="314" font-size="11" transform="rotate(6 1555 308)" textLength="27" lengthAdjust="spacingAndGlyphs">FRONT</text>
<text x="1579" y="315" font-size="11" transform="rotate(-12 1590 308)" textLength="21" lengthAdjust="spacingAndGlyphs">RIGHT</text>
<text x="1516" y="352" font-size="12" transform="rotate(-25 1523 347)" fill="#a8a8a8">S</text>
<text x="1615" y="349" font-size="12" transform="rotate(28 1621 344)" fill="#a8a8a8">E</text>
<text x="1520" y="325" font-size="9" transform="rotate(-18 1525 320)" fill="#b0b0b0">W</text>
</g>
<!-- navbar -->
<rect x="1631.5" y="385.5" width="29" height="99" fill="#e2e2e2" fill-opacity=".75" stroke="#a4a4a4" stroke-width="1"/>
<path d="M1651.5 389.5l4 4M1655.5 389.5l-4 4" stroke="#8a8a8a" stroke-width="1.2"/>
<circle cx="1645.5" cy="411.5" r="10.8" fill="#f2f2f2" stroke="#a8a8a8" stroke-width="1.3"/>
<path d="M1642.5 403.5l8.5 3.5v8.5l-5 3.5-6.5-3.8 .5-4 2.5-1z" fill="#a9c8ea" stroke="#7a9cc8" stroke-width=".8"/>
<path d="M1642.5 403.5l-1 7 4.5 2.5 5-6" fill="none" stroke="#dceafa" stroke-width=".8"/>
<path d="M1643 430h5l-2.5 2.5z" fill="#8a8a8a"/>
<circle cx="1644.5" cy="450.5" r="6" fill="#eef0ee" stroke="#8c8c8c" stroke-width="1.2"/>
<rect x="1641.5" y="447.5" width="6" height="6" fill="#a8d4a0" stroke="#5aa050" stroke-width=".9"/>
<path d="M1648.8 454.8l4.2 4.4" stroke="#777" stroke-width="2.6" stroke-linecap="round"/>
<path d="M1643 466h5l-2.5 2.5z" fill="#8a8a8a"/>
<path d="M1650.5 476.5h5M1650.5 478.5h5l-2.5 2.5z" stroke="#8a8a8a" stroke-width=".8" fill="#8a8a8a"/>
<!-- view window buttons -->
<rect x="1610.5" y="203.5" width="11" height="4" fill="#fff" stroke="#333" stroke-width="1.2"/>
<rect x="1631" y="199" width="8" height="9" fill="none" stroke="#333" stroke-width="1.2"/>
<rect x="1628.5" y="201.5" width="8" height="9" fill="#f0f0f0" stroke="#333" stroke-width="1.3"/>
<rect x="1631.5" y="204.5" width="2" height="3" fill="none" stroke="#333" stroke-width=".9"/>
<path d="M1647 201l9 9M1656 201l-9 9" stroke="#333" stroke-width="3"/>
<path d="M1647 201l9 9M1656 201l-9 9" stroke="#f0f0f0" stroke-width="1.2"/>
</g>
<!-- right scrollbar -->
<rect x="1662" y="196" width="12" height="781" fill="#eeeeee"/>
<rect x="1661" y="196" width="1" height="781" fill="#f8f8f8"/>
<path d="M1668 203l-3.5 4h7z" fill="#222"/>
<path d="M1667 967h7l-3.5 4z" fill="#222"/>
<rect x="1662.5" y="579.5" width="13" height="14" rx="2" fill="#ececec" stroke="#8a8a8a" stroke-width="1"/>
<!-- bottom view control bar -->
<rect x="158" y="977" width="1516" height="18" fill="#eeeeee"/>
<rect x="158" y="977" width="1504" height="1" fill="#f6f6f6"/>
<rect x="0" y="995" width="1674" height="1" fill="#fafafa"/>
<rect x="0" y="996" width="1674" height="1" fill="#6a6a6a"/>
</svg>
<!-- view control bar -->
<div class="t" style="left:188px;top:979px;font-size:11.5px;color:#111;letter-spacing:.1px;-webkit-text-stroke:.35px #111">1 : 1</div>
<svg class="a" style="left:0;top:0" width="1674" height="1015">
<rect x="238.5" y="979.5" width="14" height="11" rx="1" fill="#fff" stroke="#333" stroke-width="1.3"/>
<g fill="#8a8a8a"><rect x="240" y="981" width="3" height="2.5"/><rect x="246" y="981" width="3" height="2.5"/><rect x="243" y="983.5" width="3" height="2.5"/><rect x="249" y="983.5" width="2.5" height="2.5"/><rect x="240" y="986" width="3" height="2.5"/><rect x="246" y="986" width="3" height="2.5"/></g>
<path d="M259.5 984.5l3-4h11v7l-3.5 3.5h-10.5z" fill="#b7d8f0" stroke="#1c6ed0" stroke-width="1.2"/><path d="M259.5 984.5h10.5v6M270 984.5l3.5-4" stroke="#1c6ed0" stroke-width="1" fill="none"/>
<circle cx="285.5" cy="983" r="4" fill="#d6ecfb" stroke="#1c6ed0" stroke-width="1.1"/><rect x="281" y="989" width="5" height="1.5" fill="#333"/>
<path d="M288 985.5l6 5.5M294 985.5l-6 5.5" stroke="#e01818" stroke-width="2"/>
<path d="M300 987.5h3M305 987.5h3" stroke="#333" stroke-width="1.5"/><path d="M303.5 991v-9h10v4" stroke="#1c6ed0" stroke-width="1.6" fill="none"/><path d="M306 980h3" stroke="#333" stroke-width="1"/>
<path d="M307.5 985.5l6 5.5M313.5 985.5l-6 5.5" stroke="#e01818" stroke-width="2"/>
<path d="M320 987.5h3M325 987.5h3" stroke="#333" stroke-width="1.5"/><path d="M323.5 991v-9h8" stroke="#1c6ed0" stroke-width="1.6" fill="none"/><path d="M327 980h3" stroke="#333" stroke-width="1"/>
<circle cx="333" cy="985" r="3" fill="#d6ecfb" stroke="#1c6ed0" stroke-width="1.2"/><path d="M332 988.5v3h2v-3" stroke="#333" stroke-width="1" fill="none"/>
<path d="M341.5 984c2-1.5 3.5 0 5 2" stroke="#2b2f36" stroke-width="1.1" fill="none"/><ellipse cx="350" cy="987.5" rx="3.5" ry="2.8" fill="#d8e8f0" stroke="#2b2f36" stroke-width="1.1"/><ellipse cx="353.5" cy="983.5" rx="3.3" ry="2.8" fill="#d8e8f0" stroke="#2b2f36" stroke-width="1.1"/><path d="M356.5 982.5c.5-1 .5-2-.5-2.5" stroke="#2b2f36" stroke-width="1" fill="none"/>
<path d="M369.5 990.5v-2c-2-1-3-3-3-4.5a3.5 3.5 0 0 1 7 0c0 1.5-1 3.5-3 4.5v2z" fill="#f2f2f2" stroke="#b4b4b4" stroke-width="1"/>
<rect x="381" y="978" width="1281" height="17" fill="#eeeeee"/>
<rect x="381" y="978" width="14" height="17" fill="#e4e4e4"/>
<path d="M391 983v6l-4-3z" fill="#222"/>
<path d="M1650 982v7l4-3.5z" fill="#222"/>
<rect x="1014.5" y="978.5" width="14" height="14" rx="2" fill="#ececec" stroke="#8c8c8c" stroke-width="1"/>
<g fill="#b0b0b0"><rect x="1671" y="986" width="1" height="1"/><rect x="1668" y="989" width="1" height="1"/><rect x="1671" y="989" width="1" height="1"/><rect x="1665" y="992" width="1" height="1"/><rect x="1668" y="992" width="1" height="1"/><rect x="1671" y="992" width="1" height="1"/></g>
</svg>
<!-- status bar -->
<div class="a" style="left:0;top:997px;width:1674px;height:18px;background:linear-gradient(#e9e9e9,#d3d3d3)"></div>
<div class="a" style="left:1259px;top:998px;width:1px;height:17px;background:#f2f2f2"></div>
<div class="a" style="left:1258px;top:998px;width:1px;height:17px;background:#d0d0d0"></div>
<div class="t" style="left:2px;top:1002px;font-size:11.2px;color:#111">Ready</div>
<div class="t" style="left:1502px;top:1001px;font-size:11.3px;color:#111">Press &amp; Drag</div>
<svg class="a" style="left:1480px;top:997px" width="140" height="18">
<rect x="5.5" y="5.5" width="12" height="12" fill="#fff" stroke="#333" stroke-width="1"/>
<path d="M8 11.5l2.5 3 5-7" stroke="#18a018" stroke-width="1.8" fill="none"/>
<path d="M107.5 6.5h16l-6 7v5h-4v-5z" fill="#e0e4e8" stroke="#333" stroke-width="1.1"/>
<text x="124" y="17" font-family="Liberation Sans" font-size="10" fill="#111">:0</text>
</svg>
</body></html>
